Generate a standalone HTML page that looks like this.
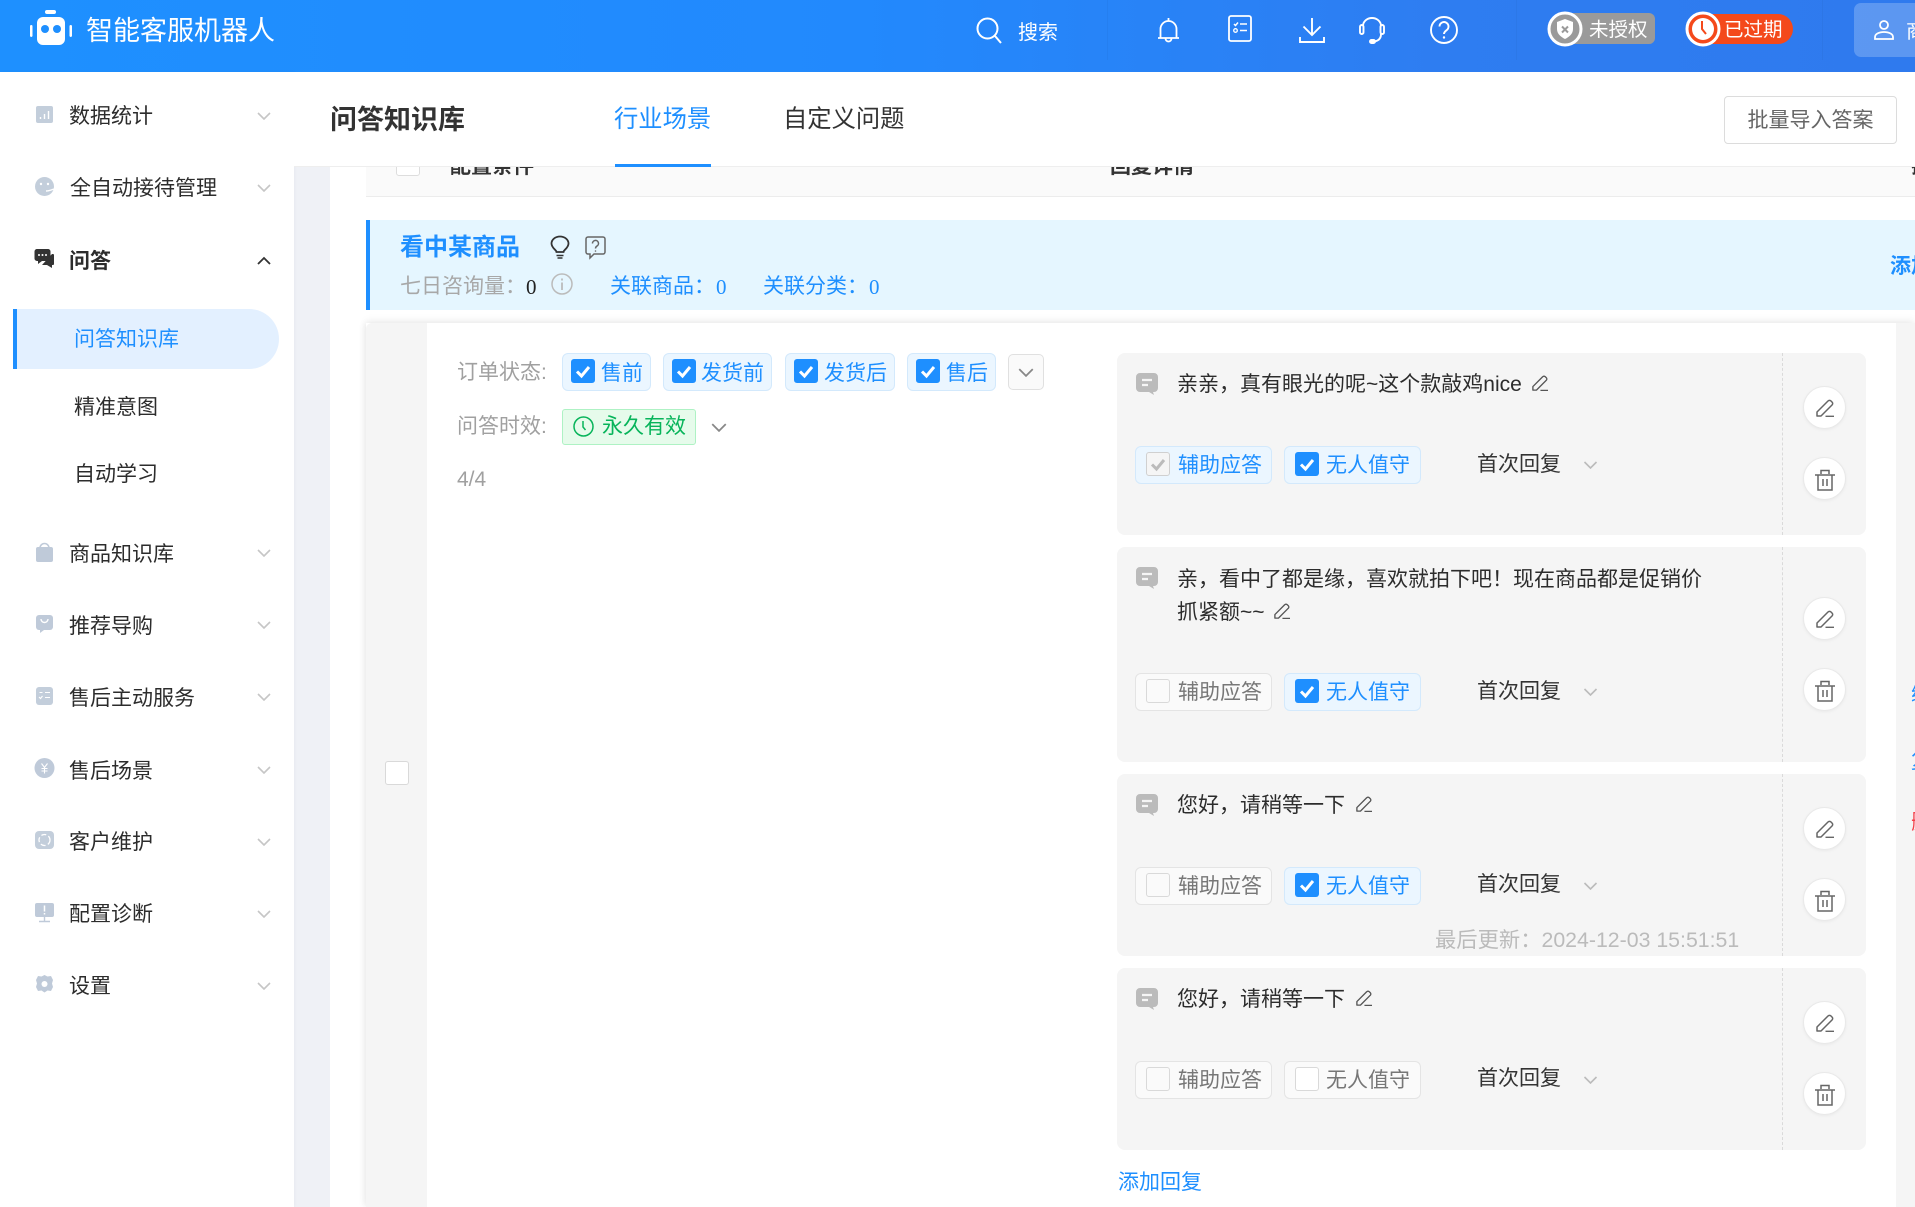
<!DOCTYPE html>
<html lang="zh-CN">
<head>
<meta charset="utf-8">
<title>智能客服机器人</title>
<style>
html,body{margin:0;padding:0;background:#fff}
body{width:1915px;height:1207px;overflow:hidden;position:relative;font-family:"Liberation Sans","Noto Sans CJK SC",sans-serif;color:#333}
.a{position:absolute}
.t{position:absolute;white-space:nowrap;font-size:21px;line-height:30px;transform:translateY(2px)}
.t1{transform:translateY(1px)}
.g{color:#a0a0a0}.b{color:#1e8fff}.w{color:#fff}
.nav{position:absolute;left:69px;white-space:nowrap;font-size:21px;line-height:30px;color:#2c2c2c;transform:translateY(2px)}
.sub{left:74px}
.tag{position:absolute;box-sizing:border-box;height:38px;border:1px solid #d3e9fc;border-radius:6px;background:#ebf6ff;color:#1e8fff;font-size:21px;line-height:35px;white-space:nowrap}
.tag.off{background:#fafafa;border-color:#e4e4e4;color:#777}
.cb{position:absolute;top:5px;width:24px;height:24px;border-radius:3px;background:#1e8fff;box-sizing:border-box}
.cb svg{position:absolute;left:0;top:0;width:24px;height:24px}
.cb.e{background:#fafafa;border:1px solid #d9d9d9}
.cb.w2{background:#fff;border:1px solid #d9d9d9}
.cb.d{background:#f5f5f5;border:1px solid #d0d0d0}
.cb.d svg{left:-1px;top:-1px}
.tx{position:absolute;top:1px}
.r1 .tx{top:2px}
.card{position:absolute;left:1117px;width:749px;background:#f5f5f5;border-radius:8px}
.dash{position:absolute;left:665px;top:0;bottom:0;border-left:1px dashed #dadada}
.circ{position:absolute;left:686px;width:43px;height:43px;border-radius:50%;background:#fff;border:1px solid #e9e9e9;box-sizing:border-box;box-shadow:0 1px 3px rgba(0,0,0,.05)}
.ic{position:absolute;overflow:visible}
.line{position:absolute;font-size:21px;line-height:30px;left:60px;white-space:nowrap;color:#2c2c2c;transform:translateY(2px)}
</style>
</head>
<body>
<svg width="0" height="0" style="position:absolute">
<defs>
<symbol id="chev" viewBox="0 0 14 8"><path d="M1 1l6 6 6-6" fill="none" stroke="currentColor" stroke-width="1.6"/></symbol>
<symbol id="check" viewBox="0 0 24 24"><path d="M6 12.5l4.5 4.5L18 8" fill="none" stroke="currentColor" stroke-width="3"/></symbol>
<symbol id="pen" viewBox="0 0 18 18"><path d="M1 17v-4L12 2a2 2 0 0 1 3 0l1 1a2 2 0 0 1 0 3L5 17z" fill="none" stroke="currentColor" stroke-width="1.5" stroke-linejoin="round"/><path d="M9.5 17.3H18" stroke="currentColor" stroke-width="1.4"/></symbol>
<symbol id="trash" viewBox="0 0 20 22"><path d="M0 6h20M6 5V1.500h8V5M3 6v15h14V6M8 10v7M12 10v7" fill="none" stroke="currentColor" stroke-width="1.5"/></symbol>
<symbol id="chat" viewBox="0 0 22 22"><path d="M4 0h14a4 4 0 0 1 4 4v11a4 4 0 0 1-4 4h-1l1 3-5-3H4a4 4 0 0 1-4-4V4a4 4 0 0 1 4-4z" fill="#bbb"/><path d="M6 7h10M6 12h6" stroke="#f5f5f5" stroke-width="2.200"/></symbol>
</defs>
</svg>

<!-- header -->
<div class="a" style="left:0;top:0;width:1915px;height:72px;background:linear-gradient(90deg,#1e90ff 0%,#2289fd 45%,#2e7df1 75%,#2f7aee 100%)"></div>
<div class="a" style="left:1107px;top:0;width:1px;height:60px;background:rgba(0,0,0,.03)"></div>
<div class="a" style="left:1516px;top:0;width:1px;height:60px;background:rgba(0,0,0,.03)"></div>
<div class="a" style="left:1822px;top:0;width:1px;height:60px;background:rgba(0,0,0,.03)"></div>
<svg class="ic" style="left:28px;top:8px" width="46" height="38" viewBox="0 0 46 38">
<rect x="17" y="2" width="11" height="4" rx="2" fill="#fff"/>
<rect x="9" y="9" width="28" height="28" rx="6" fill="#fff"/>
<circle cx="17" cy="21" r="4" fill="#1e8fff"/><circle cx="29" cy="21" r="4" fill="#1e8fff"/>
<rect x="2" y="17" width="2.500" height="12" rx="1.200" fill="#fff"/><rect x="41.500" y="17" width="2.500" height="12" rx="1.200" fill="#fff"/>
</svg>
<div class="t t1 w" style="left:86px;top:12px;font-size:27px;line-height:36px">智能客服机器人</div>
<svg class="ic" style="left:976px;top:17px" width="27" height="27" viewBox="0 0 27 27" fill="none" stroke="#fff" stroke-width="2"><circle cx="11.500" cy="11.500" r="10"/><path d="M19 19l6 7"/></svg>
<div class="t t1 w" style="left:1018px;top:17px;font-size:20px">搜索</div>
<svg class="ic" style="left:1157px;top:17px" width="23" height="26" viewBox="0 0 23 26" fill="none" stroke="#fff" stroke-width="1.800"><path d="M1 21h21M3.500 21v-9a8 8 0 0 1 16 0v9M11.500 4V1M8.500 21.500a3 3 0 0 0 6 0"/></svg>
<svg class="ic" style="left:1228px;top:15px" width="24" height="27" viewBox="0 0 24 27" fill="none" stroke="#fff" stroke-width="1.800"><rect x="1" y="1" width="22" height="25" rx="2"/><path d="M6 9l1.500 1.500L10 7.500M12 9h7M12 15.500h7" stroke-width="1.500"/><circle cx="7.500" cy="15.500" r="1.800" stroke-width="1.300"/></svg>
<svg class="ic" style="left:1299px;top:17px" width="26" height="26" viewBox="0 0 26 26" fill="none" stroke="#fff" stroke-width="1.900"><path d="M13 1v17M4.500 9.500L13 18l8.500-8.500M1 20v5h24v-5"/></svg>
<svg class="ic" style="left:1359px;top:17px" width="26" height="27" viewBox="0 0 26 27" fill="none" stroke="#fff" stroke-width="1.900"><path d="M4 9a9 8 0 0 1 18 0M22 17c0 5-3 7-7 7.500"/><rect x="1" y="8" width="3.500" height="9" rx="1.700"/><rect x="21.500" y="8" width="3.500" height="9" rx="1.700"/><rect x="11" y="23" width="5" height="3" rx="1.500" fill="#fff"/></svg>
<svg class="ic" style="left:1430px;top:16px" width="28" height="28" viewBox="0 0 28 28" fill="none" stroke="#fff" stroke-width="1.900"><circle cx="14" cy="14" r="13"/><path d="M9.500 10.500a4.500 4.500 0 1 1 7 3.800c-1.700 1.200-2.500 2-2.500 3.700"/><circle cx="14" cy="21.500" r="1.200" fill="#fff" stroke="none"/></svg>
<!-- badges -->
<div class="a" style="left:1570px;top:13px;width:85px;height:31px;background:#9a9a9a;border-radius:0 6px 6px 0"></div>
<svg class="ic" style="left:1547px;top:11px" width="36" height="36" viewBox="0 0 36 36"><circle cx="18" cy="18" r="16" fill="#9a9a9a" stroke="#fff" stroke-width="3"/><path d="M18 8l8 3v7c0 5-4 8-8 10-4-2-8-5-8-10v-7z" fill="#fff"/><path d="M15 15.500l6 6M21 15.500l-6 6" stroke="#9a9a9a" stroke-width="2"/></svg>
<div class="t w" style="left:1589px;top:13px;font-size:19.500px">未授权</div>
<div class="a" style="left:1703px;top:14px;width:90px;height:30px;background:#f4491b;border-radius:0 15px 15px 0"></div>
<svg class="ic" style="left:1685px;top:11px" width="36" height="36" viewBox="0 0 36 36"><circle cx="18" cy="18" r="16" fill="#f4491b" stroke="#fff" stroke-width="3"/><circle cx="18" cy="18" r="11" fill="#fff"/><path d="M17 10v8l4 5" fill="none" stroke="#f4491b" stroke-width="2"/></svg>
<div class="t w" style="left:1724px;top:13px;font-size:19.500px">已过期</div>
<div class="a" style="left:1854px;top:3px;width:70px;height:54px;background:rgba(255,255,255,.22);border-radius:7px"></div>
<svg class="ic" style="left:1874px;top:20px" width="20" height="20" viewBox="0 0 20 20" fill="none" stroke="#fff" stroke-width="1.800"><circle cx="10" cy="5" r="4"/><path d="M1 19v-2c0-3 4-5 9-5s9 2 9 5v2z"/></svg>
<div class="t w" style="left:1906px;top:15px;font-size:20px">商</div>

<!-- sidebar -->
<div class="a" style="left:294px;top:72px;width:36px;height:1135px;background:#eff1f6"></div>
<div class="a" style="left:0;top:72px;width:294px;height:1135px;background:#fff;box-shadow:1px 0 3px rgba(0,0,0,.03)"></div>
<div class="nav" style="top:100px">数据统计</div>
<div class="nav" style="top:172px;left:70px">全自动接待管理</div>
<div class="nav" style="top:245px;font-weight:700">问答</div>
<div class="a" style="left:13px;top:309px;width:266px;height:60px;box-sizing:border-box;background:#e3f0ff;border-left:4px solid #1e8fff;border-radius:0 30px 30px 0"></div>
<div class="nav sub b" style="top:323px;color:#1e8fff">问答知识库</div>
<div class="nav sub" style="top:391px">精准意图</div>
<div class="nav sub" style="top:458px">自动学习</div>
<div class="nav" style="top:538px">商品知识库</div>
<div class="nav" style="top:610px">推荐导购</div>
<div class="nav" style="top:682px">售后主动服务</div>
<div class="nav" style="top:755px">售后场景</div>
<div class="nav" style="top:826px">客户维护</div>
<div class="nav" style="top:898px">配置诊断</div>
<div class="nav" style="top:970px">设置</div>
<svg class="ic" style="left:0;top:0;color:#c6c6c6" width="294" height="1100">
<use href="#chev" x="257" y="112" width="14" height="8"/>
<use href="#chev" x="257" y="184" width="14" height="8"/>
<use href="#chev" x="257" y="549" width="14" height="8"/>
<use href="#chev" x="257" y="621" width="14" height="8"/>
<use href="#chev" x="257" y="693" width="14" height="8"/>
<use href="#chev" x="257" y="766" width="14" height="8"/>
<use href="#chev" x="257" y="838" width="14" height="8"/>
<use href="#chev" x="257" y="910" width="14" height="8"/>
<use href="#chev" x="257" y="982" width="14" height="8"/>
<path d="M258 264l6-6 6 6" fill="none" stroke="#333" stroke-width="1.800"/>
<!-- sidebar icons -->
<rect x="36" y="106" width="17" height="17" rx="2" fill="#c3cedb"/><path d="M40.500 119v-2M44.500 119v-5M48.500 119v-8" stroke="#fff" stroke-width="1.400"/>
<circle cx="44.500" cy="186.500" r="9.500" fill="#c3cedb"/><circle cx="41" cy="184" r="1.200" fill="#fff"/><circle cx="48" cy="184" r="1.200" fill="#fff"/><path d="M46 191c3 0 5-1 8-2" stroke="#fff" stroke-width="1.400" fill="none"/>
<path d="M37 249h11a2.500 2.500 0 0 1 2.500 2.500v7a2.500 2.500 0 0 1-2.500 2.500h-6l-4 3v-3h-1a2.500 2.500 0 0 1-2.500-2.500v-7A2.500 2.500 0 0 1 37 249z" fill="#333"/><path d="M52 254h1a1 1 0 0 1 1 1v9a1 1 0 0 1-1 1h-1v3l-5-3h-5" fill="#333"/><circle cx="39" cy="255" r="1" fill="#fff"/><circle cx="42.500" cy="255" r="1" fill="#fff"/><circle cx="46" cy="255" r="1" fill="#fff"/>
<path d="M38 547h13a2 2 0 0 1 2 2v11a2 2 0 0 1-2 2H38a2 2 0 0 1-2-2v-11a2 2 0 0 1 2-2z" fill="#bfcad9"/><path d="M40 550v-2a4.500 4.500 0 0 1 9 0v2" fill="none" stroke="#bfcad9" stroke-width="1.600"/>
<rect x="36" y="615" width="17" height="15" rx="3" fill="#bfcad9"/><path d="M40 630v3l4-3z" fill="#bfcad9"/><path d="M41 619a3.500 3.500 0 0 0 7 0" fill="none" stroke="#fff" stroke-width="1.400"/>
<rect x="36" y="687" width="17" height="18" rx="3" fill="#c3cedb"/><path d="M39 697l1.500 1.500 2-2.500M45 692.500h5M45 697.500h5M39.500 692.500h3" stroke="#fff" stroke-width="1.100" fill="none"/>
<circle cx="44.500" cy="768" r="10" fill="#bfcad9"/><path d="M41.500 763.500l3 4 3-4M44.500 767.500v6M41.500 768.500h6M41.500 771h6" stroke="#fff" stroke-width="1.100" fill="none"/>
<rect x="35" y="831" width="19" height="18" rx="4" fill="#c3cedb"/><circle cx="44.500" cy="840" r="5.500" fill="none" stroke="#fff" stroke-width="1.300" stroke-dasharray="5 2.500"/>
<rect x="35" y="903" width="19" height="14" rx="2" fill="#bfcad9"/><path d="M44.500 905.500v6M44.500 913v1.500" stroke="#fff" stroke-width="1.500"/><path d="M44.500 917v4M39 921.500h11" stroke="#bfcad9" stroke-width="1.400"/>
<path d="M44.500 975l3 1.500 3.500-.5 2 4-1 3.500 1 3.500-2 4-3.500-.5-3 2-3-2-3.500.5-2-4 1-3.500-1-3.500 2-4 3.500.5z" fill="#bfcad9"/><circle cx="44.500" cy="984" r="3" fill="#fff"/>
</svg>

<!-- table head (clipped under sub header) -->
<div class="a" style="left:330px;top:167px;width:1585px;height:54px;background:#fff"></div>
<div class="a" style="left:366px;top:150px;width:1549px;height:46px;background:#fafafa;border-bottom:1px solid #ececec"></div>
<div class="a" style="left:396px;top:150px;width:24px;height:26px;box-sizing:border-box;background:#fff;border:1px solid #ddd;border-radius:3px"></div>
<div class="t" style="left:450px;top:150px;font-weight:700">配置条件</div>
<div class="t" style="left:1110px;top:150px;font-weight:700">回复详情</div>
<div class="t" style="left:1911px;top:150px;font-weight:700">操作</div>
<!-- sub header -->
<div class="a" style="left:294px;top:72px;width:1621px;height:95px;background:#fff;border-bottom:1px solid #eee;box-sizing:border-box"></div>
<div class="t" style="left:330px;top:100px;font-size:27px;line-height:36px;font-weight:700;color:#333">问答知识库</div>
<div class="t b" style="left:614px;top:100px;font-size:24.300px;line-height:36px">行业场景</div>
<div class="a" style="left:615px;top:164px;width:96px;height:3px;background:#1e8fff"></div>
<div class="t" style="left:783px;top:100px;font-size:24.300px;line-height:36px">自定义问题</div>
<div class="a" style="left:1724px;top:96px;width:173px;height:48px;box-sizing:border-box;background:#fff;border:1px solid #dcdcdc;border-radius:4px;text-align:center;font-size:21px;line-height:48px;color:#666">批量导入答案</div>

<!-- banner -->
<div class="a" style="left:366px;top:220px;width:1549px;height:90px;box-sizing:border-box;background:#e5f6ff;border-left:4px solid #1e8fff"></div>
<div class="t t1 b" style="left:400px;top:232px;font-size:24px;font-weight:700">看中某商品</div>
<svg class="ic" style="left:550px;top:236px" width="20" height="23" viewBox="0 0 20 23" fill="none" stroke="#333" stroke-width="1.800"><path d="M6.500 16c0-2-5-4-5-8.500a8.500 7 0 0 1 17 0c0 4.500-5 6.500-5 8.500z"/><path d="M6.500 19.500h7M7.500 22h5" stroke-width="1.500"/></svg>
<svg class="ic" style="left:585px;top:236px" width="21" height="23" viewBox="0 0 21 23" fill="none" stroke="#666" stroke-width="1.500"><path d="M3 1h15a2 2 0 0 1 2 2v13a2 2 0 0 1-2 2H9l-4 4v-4H3a2 2 0 0 1-2-2V3a2 2 0 0 1 2-2z"/><path d="M7.500 7.500a3 3 0 1 1 4.500 2.500c-1 .7-1.500 1.200-1.500 2.500"/><circle cx="10.500" cy="15" r=".8" fill="#666" stroke="none"/></svg>
<div class="t" style="left:400px;top:270px;color:#a8a8a8">七日咨询量：</div>
<div class="t" style="left:526px;top:270px;font-family:'Liberation Serif',serif;color:#222">0</div>
<svg class="ic" style="left:551px;top:273px" width="22" height="22" viewBox="0 0 22 22" fill="none" stroke="#bbb" stroke-width="1.500"><circle cx="11" cy="11" r="10"/><path d="M11 9.500V17M11 5.500v2" stroke-width="1.800"/></svg>
<div class="t b" style="left:610px;top:270px">关联商品：</div>
<div class="t b" style="left:716px;top:270px;font-family:'Liberation Serif',serif">0</div>
<div class="t b" style="left:763px;top:270px">关联分类：</div>
<div class="t b" style="left:869px;top:270px;font-family:'Liberation Serif',serif">0</div>
<div class="t b" style="left:1890px;top:250px;font-weight:700">添加</div>

<!-- main card -->
<div class="a" style="left:366px;top:323px;width:1549px;height:884px;background:#fff;box-shadow:0 -3px 8px rgba(0,0,0,.05),-2px 0 6px rgba(0,0,0,.06)"></div>
<div class="a" style="left:366px;top:323px;width:61px;height:884px;background:#f5f5f5;border-radius:6px 0 0 0"></div>
<div class="a" style="left:1896px;top:323px;width:19px;height:884px;background:#f5f5f5"></div>
<div class="a" style="left:385px;top:761px;width:24px;height:24px;box-sizing:border-box;background:#fff;border:1px solid #d9d9d9;border-radius:3px"></div>
<div class="t b" style="left:1911px;top:678px">编辑</div>
<div class="t b" style="left:1911px;top:745px">复制</div>
<div class="t" style="left:1911px;top:806px;color:#f5404a">删除</div>

<div class="t g" style="left:457px;top:356px">订单状态:</div>
<div class="tag r1" style="left:562px;top:353px;width:89px"><span class="cb" style="left:8px"><svg style="color:#fff"><use href="#check"/></svg></span><span class="tx" style="left:38px">售前</span></div>
<div class="tag r1" style="left:663px;top:353px;width:109px"><span class="cb" style="left:8px"><svg style="color:#fff"><use href="#check"/></svg></span><span class="tx" style="left:37px">发货前</span></div>
<div class="tag r1" style="left:785px;top:353px;width:110px"><span class="cb" style="left:8px"><svg style="color:#fff"><use href="#check"/></svg></span><span class="tx" style="left:38px">发货后</span></div>
<div class="tag r1" style="left:907px;top:353px;width:89px"><span class="cb" style="left:8px"><svg style="color:#fff"><use href="#check"/></svg></span><span class="tx" style="left:38px">售后</span></div>
<div class="a" style="left:1008px;top:354px;width:36px;height:36px;box-sizing:border-box;background:#fafafa;border:1px solid #e0e0e0;border-radius:5px"></div>
<svg class="ic" style="left:1018px;top:368px;color:#888" width="16" height="9"><use href="#chev" width="16" height="9"/></svg>

<div class="t g" style="left:457px;top:410px">问答时效:</div>
<div class="a" style="left:562px;top:409px;width:134px;height:36px;box-sizing:border-box;background:#e6fbeb;border:1px solid #aef2c4;border-radius:3px"></div>
<svg class="ic" style="left:573px;top:416px" width="21" height="21" viewBox="0 0 21 21" fill="none" stroke="#07b45a" stroke-width="1.500"><circle cx="10.500" cy="10.500" r="9.500"/><path d="M10 5v6l2.500 3"/></svg>
<div class="t" style="left:602px;top:410px;color:#07b45a">永久有效</div>
<svg class="ic" style="left:711px;top:423px;color:#888" width="16" height="9"><use href="#chev" width="16" height="9"/></svg>
<div class="t g" style="left:457px;top:463px">4/4</div>

<!-- reply card 1 -->
<div class="card" style="top:353px;height:182px">
<div class="dash"></div>
<svg class="ic" style="left:19px;top:20px" width="22" height="22"><use href="#chat" width="22" height="22"/></svg>
<div class="line" style="top:15px">亲亲，真有眼光的呢~这个款敲鸡nice</div>
<svg class="ic" style="left:415px;top:22px;color:#555" width="16" height="16"><use href="#pen" width="16" height="16"/></svg>
<div class="tag" style="left:18px;top:93px;width:137px"><span class="cb d" style="left:10px"><svg style="color:#bbb"><use href="#check"/></svg></span><span class="tx" style="left:42px">辅助应答</span></div>
<div class="tag" style="left:167px;top:93px;width:137px"><span class="cb" style="left:10px"><svg style="color:#fff"><use href="#check"/></svg></span><span class="tx" style="left:41px">无人值守</span></div>
<div class="t" style="left:360px;top:95px">首次回复</div>
<svg class="ic" style="left:466px;top:108px;color:#bbb" width="15" height="8"><use href="#chev" width="15" height="8"/></svg>
<div class="circ" style="top:33px"><svg class="ic" style="left:12px;top:12px;color:#666" width="18" height="18"><use href="#pen" width="18" height="18"/></svg></div>
<div class="circ" style="top:104px"><svg class="ic" style="left:11px;top:11px;color:#666" width="20" height="22"><use href="#trash" width="20" height="22"/></svg></div>
</div>

<!-- reply card 2 -->
<div class="card" style="top:547px;height:215px">
<div class="dash"></div>
<svg class="ic" style="left:19px;top:20px" width="22" height="22"><use href="#chat" width="22" height="22"/></svg>
<div class="line" style="top:16px">亲，看中了都是缘，喜欢就拍下吧！现在商品都是促销价</div>
<div class="line" style="top:49px">抓紧额~~</div>
<svg class="ic" style="left:157px;top:56px;color:#555" width="16" height="16"><use href="#pen" width="16" height="16"/></svg>
<div class="tag off" style="left:18px;top:126px;width:137px"><span class="cb e" style="left:10px"></span><span class="tx" style="left:42px">辅助应答</span></div>
<div class="tag" style="left:167px;top:126px;width:137px"><span class="cb" style="left:10px"><svg style="color:#fff"><use href="#check"/></svg></span><span class="tx" style="left:41px">无人值守</span></div>
<div class="t" style="left:360px;top:128px">首次回复</div>
<svg class="ic" style="left:466px;top:141px;color:#bbb" width="15" height="8"><use href="#chev" width="15" height="8"/></svg>
<div class="circ" style="top:50px"><svg class="ic" style="left:12px;top:12px;color:#666" width="18" height="18"><use href="#pen" width="18" height="18"/></svg></div>
<div class="circ" style="top:121px"><svg class="ic" style="left:11px;top:11px;color:#666" width="20" height="22"><use href="#trash" width="20" height="22"/></svg></div>
</div>

<!-- reply card 3 -->
<div class="card" style="top:774px;height:182px">
<div class="dash"></div>
<svg class="ic" style="left:19px;top:20px" width="22" height="22"><use href="#chat" width="22" height="22"/></svg>
<div class="line" style="top:15px">您好，请稍等一下</div>
<svg class="ic" style="left:239px;top:22px;color:#555" width="16" height="16"><use href="#pen" width="16" height="16"/></svg>
<div class="tag off" style="left:18px;top:93px;width:137px"><span class="cb e" style="left:10px"></span><span class="tx" style="left:42px">辅助应答</span></div>
<div class="tag" style="left:167px;top:93px;width:137px"><span class="cb" style="left:10px"><svg style="color:#fff"><use href="#check"/></svg></span><span class="tx" style="left:41px">无人值守</span></div>
<div class="t" style="left:360px;top:94px">首次回复</div>
<svg class="ic" style="left:466px;top:108px;color:#bbb" width="15" height="8"><use href="#chev" width="15" height="8"/></svg>
<div class="circ" style="top:33px"><svg class="ic" style="left:12px;top:12px;color:#666" width="18" height="18"><use href="#pen" width="18" height="18"/></svg></div>
<div class="circ" style="top:104px"><svg class="ic" style="left:11px;top:11px;color:#666" width="20" height="22"><use href="#trash" width="20" height="22"/></svg></div>
<div class="t" style="left:318px;top:149px;color:#bbb;font-size:21.300px">最后更新：2024-12-03 15:51:51</div>
</div>

<!-- reply card 4 -->
<div class="card" style="top:968px;height:182px">
<div class="dash"></div>
<svg class="ic" style="left:19px;top:20px" width="22" height="22"><use href="#chat" width="22" height="22"/></svg>
<div class="line" style="top:15px">您好，请稍等一下</div>
<svg class="ic" style="left:239px;top:22px;color:#555" width="16" height="16"><use href="#pen" width="16" height="16"/></svg>
<div class="tag off" style="left:18px;top:93px;width:137px"><span class="cb e" style="left:10px"></span><span class="tx" style="left:42px">辅助应答</span></div>
<div class="tag off" style="left:167px;top:93px;width:137px"><span class="cb w2" style="left:10px"></span><span class="tx" style="left:41px">无人值守</span></div>
<div class="t" style="left:360px;top:94px">首次回复</div>
<svg class="ic" style="left:466px;top:108px;color:#bbb" width="15" height="8"><use href="#chev" width="15" height="8"/></svg>
<div class="circ" style="top:33px"><svg class="ic" style="left:12px;top:12px;color:#666" width="18" height="18"><use href="#pen" width="18" height="18"/></svg></div>
<div class="circ" style="top:104px"><svg class="ic" style="left:11px;top:11px;color:#666" width="20" height="22"><use href="#trash" width="20" height="22"/></svg></div>
</div>

<div class="t b" style="left:1118px;top:1166px">添加回复</div>
</body>
</html>
